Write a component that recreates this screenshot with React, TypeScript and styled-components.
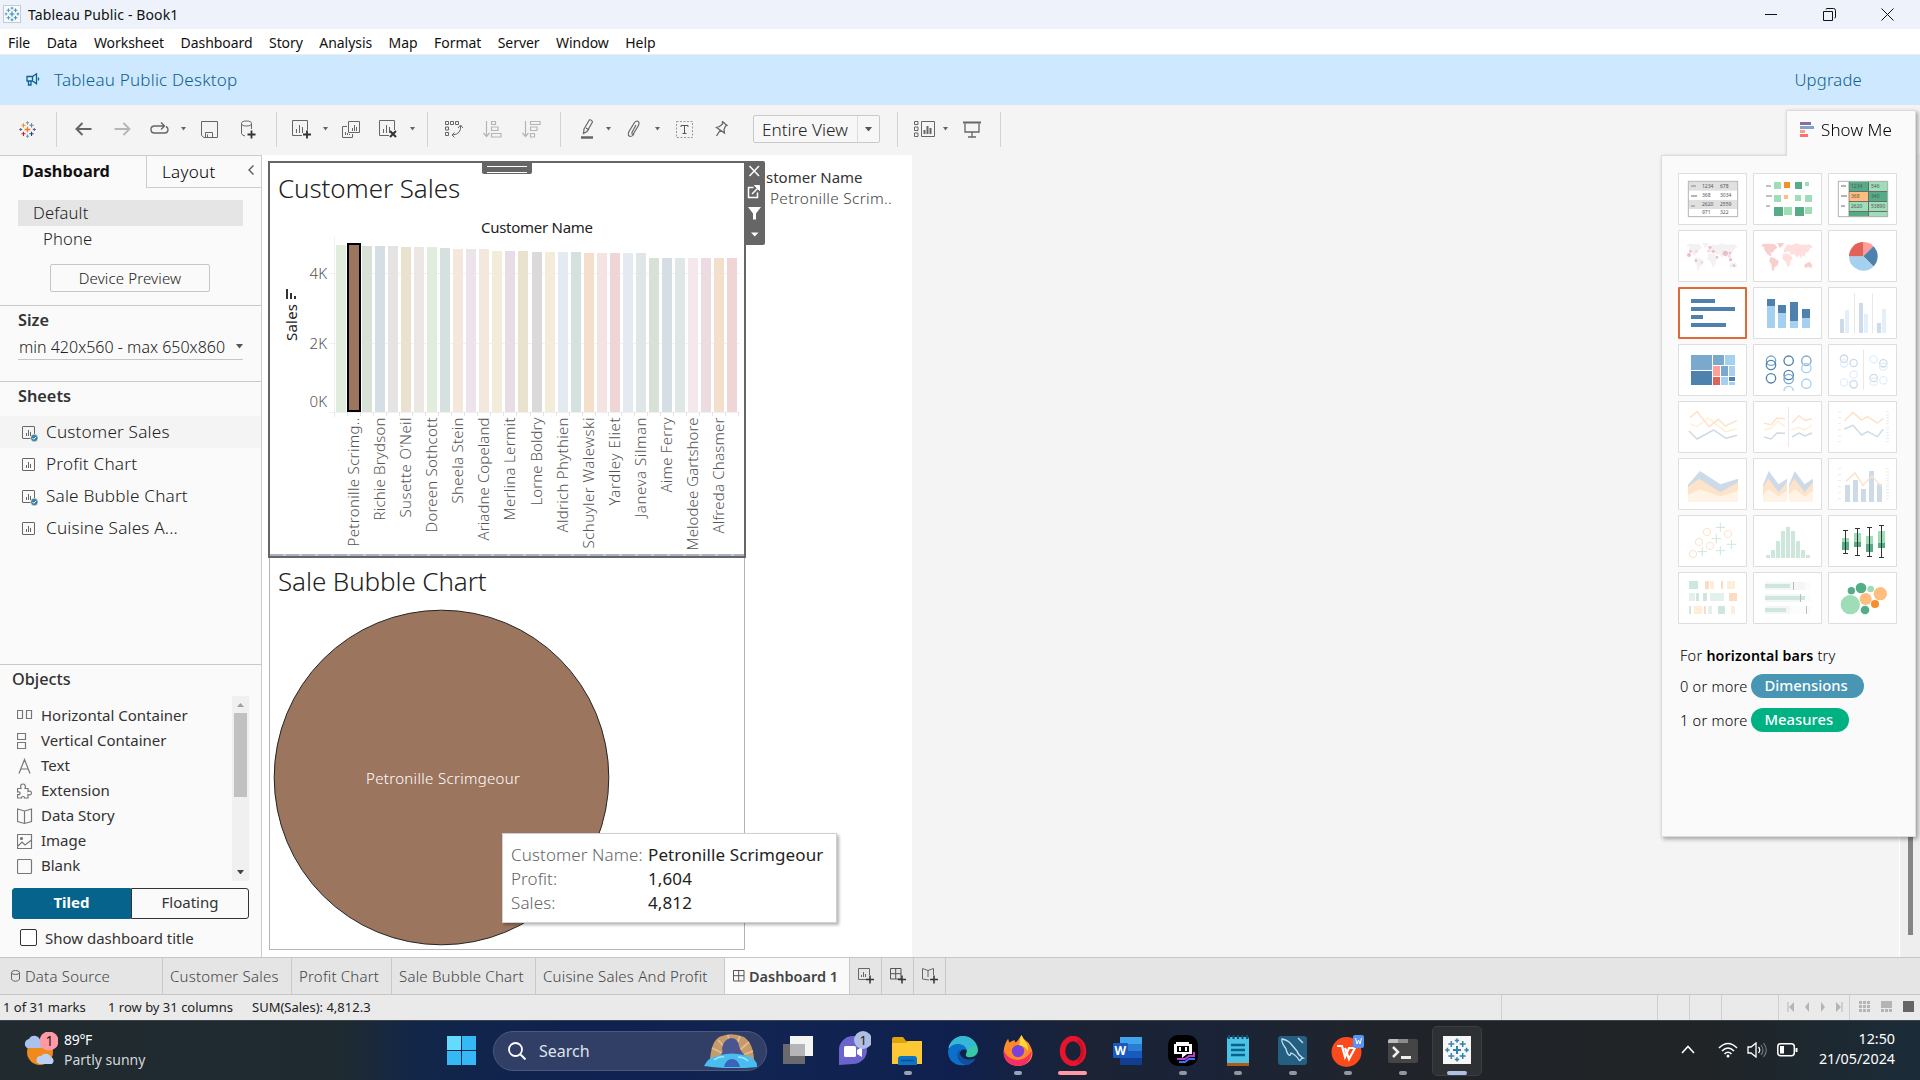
import React from 'react';
import styled, { createGlobalStyle, css } from 'styled-components';

const GlobalStyle = createGlobalStyle`
  * { box-sizing: border-box; }
  body { margin: 0; background: #f4f4f4; }
  body, button { font-family: "Noto Sans", "Open Sans", sans-serif; }
  svg { display: block; flex: none; }
`;

const Screen = styled.div`
  position: relative;
  width: 1920px;
  height: 1080px;
  overflow: hidden;
  display: flex;
  flex-direction: column;
  white-space: nowrap;
  background: #f4f4f4;
  color: #333;
`;

/* ---------- window chrome ---------- */
const TitleBar = styled.header`
  height: 29px;
  display: flex;
  align-items: center;
  background: #eef3fb;
  padding: 0 26px 0 3px;
  font-size: 14px;
  color: #111;
`;
const AppTitle = styled.span`
  margin-left: 6px;
  flex: 1;
  letter-spacing: 0.12px;
`;
const WindowControls = styled.div`
  display: flex;
  gap: 45px;
`;
const MenuBar = styled.nav`
  height: 26px;
  display: flex;
  align-items: center;
  gap: 16.5px;
  padding: 2px 8px 0;
  background: #fff;
  border-bottom: 1px solid #e9edf0;
  font-size: 14px;
  letter-spacing: -0.06px;
  color: #111;
`;
const Banner = styled.div`
  height: 50px;
  display: flex;
  align-items: center;
  background: #cde8ff;
  padding: 0 58px 2px 26px;
  font-size: 17px;
  font-weight: 350;
  color: #0f628c;
  letter-spacing: 0.22px;
`;
const BannerText = styled.span`
  margin-left: 14px;
  flex: 1;
`;
const BannerLink = styled.a`
  font-size: 16.6px;
`;

/* ---------- toolbar ---------- */
const Toolbar = styled.div`
  height: 50px;
  display: flex;
  align-items: center;
  padding: 0 0 2px 19px;
  background: #f4f4f4;
  color: #666;
`;
const Tool = styled.span<{ $gap?: number; $dim?: boolean }>`
  display: flex;
  margin-left: ${p => p.$gap ?? 0}px;
  color: ${p => (p.$dim ? '#b5b5b5' : '#666')};
`;
const Separator = styled.i<{ $gap: number }>`
  width: 1px;
  height: 35px;
  margin-left: ${p => p.$gap}px;
  background: #d2d2d2;
`;
const ViewSelect = styled.div`
  width: 127px;
  height: 28px;
  margin-left: 25px;
  display: flex;
  align-items: center;
  border: 1px solid #c9c9c9;
  border-radius: 2px;
  background: #f7f7f7;
  font-size: 17.2px;
  font-weight: 350;
  color: #222;
  padding-left: 8px;
`;
const SelectArrow = styled.span`
  margin-left: auto;
  width: 22px;
  height: 26px;
  display: flex;
  align-items: center;
  justify-content: center;
  border-left: 1px solid #ddd;
`;

/* ---------- sidebar ---------- */
const Workspace = styled.main`
  height: 802px;
  display: flex;
`;
const Sidebar = styled.aside`
  width: 262px;
  display: flex;
  flex-direction: column;
  background: #fafafa;
  border-top: 1px solid #cdcdcd;
  border-right: 1px solid #cdcdcd;
`;
const Tabs = styled.div`
  display: flex;
  height: 32px;
`;
const ActiveTab = styled.div`
  width: 146px;
  padding: 0 0 0 22px;
  line-height: 30px;
  font-size: 16.3px;
  font-weight: 700;
  color: #111;
`;
const OtherTab = styled.div`
  flex: 1;
  display: flex;
  align-items: center;
  justify-content: space-between;
  padding: 0 7px 0 15px;
  border-left: 1px solid #cdcdcd;
  border-bottom: 1px solid #cdcdcd;
  font-size: 17px;
  font-weight: 350;
  letter-spacing: 0.3px;
  color: #000;
  svg { margin-bottom: 3px; }
`;
const DeviceSection = styled.section`
  height: 118px;
  padding: 12px 18px 0;
  border-bottom: 1px solid #c9c9c9;
  font-size: 16.6px;
  font-weight: 350;
  letter-spacing: 0.15px;
  color: #222;
`;
const DeviceRow = styled.div<{ $active?: boolean }>`
  height: 26px;
  line-height: 25px;
  padding-left: ${p => (p.$active ? 15 : 25)}px;
  background: ${p => (p.$active ? '#e5e5e5' : 'transparent')};
`;
const DeviceButton = styled.div`
  width: 160px;
  height: 28px;
  margin: 12px 0 0 32px;
  border: 1px solid #c6c6c6;
  border-radius: 2px;
  text-align: center;
  font-size: 15px;
  line-height: 27px;
`;
const SizeSection = styled.section`
  height: 76px;
  padding: 0 18px;
  border-bottom: 1px solid #c9c9c9;
`;
const Heading = styled.h3`
  margin: 0;
  font-size: 16.3px;
  font-weight: 600;
  line-height: 29px;
  color: #333;
`;
const SizeSelect = styled.div`
  height: 25px;
  display: flex;
  align-items: center;
  justify-content: space-between;
  border-bottom: 1px solid #c6c6c6;
  font-size: 16px;
  font-weight: 350;
  color: #222;
  padding: 0 0 1px 1px;
`;
const SheetsSection = styled.section`
  height: 283px;
  border-bottom: 1px solid #c9c9c9;
`;
const SheetsHeading = styled(Heading)`
  padding-left: 18px;
  height: 34px;
`;
const SheetRow = styled.div<{ $active?: boolean }>`
  height: 32px;
  display: flex;
  align-items: center;
  gap: 8px;
  padding: 0 0 2px 22px;
  font-size: 17.2px;
  font-weight: 350;
  letter-spacing: 0.17px;
  color: #222;
  background: ${p => (p.$active ? '#f4f4f4' : 'transparent')};
  svg { margin-top: 5px; }
`;
const ObjectsHeading = styled(Heading)`
  padding-left: 12px;
  height: 31px;
  font-weight: 500;
  flex: none;
`;
const ObjectsBox = styled.div`
  height: 185px;
  display: flex;
  justify-content: space-between;
  padding: 0 12px 0 17px;
`;
const ObjectList = styled.div`
  padding-top: 6px;
`;
const ObjectRow = styled.div`
  height: 25px;
  display: flex;
  align-items: center;
  gap: 8px;
  font-size: 15px;
  color: #333;
  svg { margin-top: 3px; }
`;
const ScrollTrack = styled.div`
  width: 17px;
  display: flex;
  flex-direction: column;
  align-items: center;
  padding: 7px 0;
  background: #f0f0f0;
`;
const ScrollThumb = styled.div`
  width: 13px;
  height: 84px;
  margin: 6px 0 auto;
  background: #c1c1c1;
`;
const Segmented = styled.div`
  display: flex;
  height: 31px;
  margin: 7px 12px 0;
  font-size: 15px;
  line-height: 27px;
  text-align: center;
`;
const Segment = styled.span<{ $on?: boolean }>`
  flex: ${p => (p.$on ? '0 0 119px' : '1')};
  border: 1px solid ${p => (p.$on ? '#06648c' : '#333')};
  border-radius: ${p => (p.$on ? '3px 0 0 3px' : '0 3px 3px 0')};
  background: ${p => (p.$on ? '#06648c' : '#fafafa')};
  color: ${p => (p.$on ? '#fff' : '#333')};
  font-weight: ${p => (p.$on ? 700 : 400)};
`;
const CheckRow = styled.label`
  display: flex;
  align-items: center;
  gap: 8px;
  height: 37px;
  padding-left: 20px;
  font-size: 15px;
`;
const CheckBox = styled.i`
  width: 17px;
  height: 17px;
  border: 1px solid #333;
  border-radius: 2px;
  background: #fff;
`;

/* ---------- dashboard ---------- */
const Canvas = styled.div`
  width: 650px;
  display: flex;
  background: #fff;
  padding: 6px 0 0 6px;
`;
const SheetColumn = styled.div`
  position: relative;
  width: 478px;
`;
const SheetFrame = styled.section<{ $selected?: boolean }>`
  display: flex;
  flex-direction: column;
  ${p =>
    p.$selected
      ? css`
          height: 397px;
          border: 2px solid #666;
        `
      : css`
          height: 392px;
          border: 1px solid #b4b4b4;
          border-top: 0;
          margin: 0 1px;
        `}
`;
const SheetTitle = styled.h2<{ $top: number; $h: number }>`
  margin: ${p => p.$top}px 0 0 8px;
  height: ${p => p.$h}px;
  line-height: 42px;
  font-size: 26px;
  font-weight: 300;
  letter-spacing: -0.1px;
  color: #222;
`;
const DropLine = styled.div`
  height: 2px;
  margin-top: auto;
  background: repeating-linear-gradient(90deg, #a9b2c4 0 13px, #c9c9c9 13px 16px);
`;
const DragHandle = styled.div`
  position: absolute;
  left: 214px;
  top: 0;
  width: 50px;
  height: 13px;
  padding: 5px 5px 0;
  border-radius: 0 0 2px 2px;
  background: #666;
  &::before {
    content: "";
    display: block;
    height: 5px;
    border: solid #fff;
    border-width: 1px 0;
  }
`;
const SheetActions = styled.div`
  position: absolute;
  left: 476px;
  top: 0;
  width: 21px;
  height: 84px;
  display: flex;
  flex-direction: column;
  align-items: center;
  background: #666;
  border-radius: 0 2px 2px 0;
`;
const Legend = styled.div`
  padding: 5px 0 0 20px;
  line-height: 22px;
`;
const LegendTitle = styled.div`
  font-size: 15px;
  font-weight: 450;
`;
const LegendItem = styled.div`
  padding: 0 0 0 4px;
  font-size: 15.4px;
  font-weight: 350;
  letter-spacing: 0.3px;
  color: #444;
`;
const Tooltip = styled.dl`
  position: absolute;
  left: 502px;
  top: 833px;
  width: 335px;
  height: 90px;
  margin: 0;
  padding: 9px 0 0 8px;
  display: grid;
  grid-template-columns: 137px 1fr;
  grid-auto-rows: 24px;
  line-height: 24px;
  font-size: 17px;
  background: #fff;
  border: 1px solid #d0d0d0;
  box-shadow: 2px 2px 3px rgba(0, 0, 0, 0.3);
  dt { font-weight: 300; color: #666; letter-spacing: 0.1px; }
  dd { margin: 0; color: #222; font-weight: 450; letter-spacing: 0.1px; }
`;
const PageScroll = styled.div`
  width: 21px;
  margin-left: auto;
  padding: 0 7px 22px 8px;
  display: flex;
  background: #eee;
  border-left: 1px solid #fff;
  &::after { content: ""; width: 6px; background: #858585; }
`;

/* ---------- show me ---------- */
const ShowMe = styled.aside`
  position: absolute;
  left: 1661px;
  top: 110px;
  width: 255px;
  filter: drop-shadow(2px 2px 2px rgba(0, 0, 0, 0.35));
`;
const ShowMeTab = styled.div`
  position: relative;
  z-index: 1;
  width: 130px;
  height: 46px;
  margin-left: auto;
  display: flex;
  align-items: center;
  gap: 7px;
  padding: 0 0 8px 13px;
  background: #fafafa;
  border: 1px solid #dcdcdc;
  border-bottom: 0;
  font-size: 17px;
  font-weight: 350;
  letter-spacing: 0.1px;
  color: #000;
`;
const ShowMeBody = styled.div`
  height: 682px;
  margin-top: -1px;
  padding: 17px 16px 0;
  background: #fafafa;
  border: 1px solid #dcdcdc;
`;
const TileGrid = styled.div`
  display: grid;
  grid-template-columns: repeat(3, 69px);
  gap: 5px 6px;
`;
const Tile = styled.div<{ $selected?: boolean }>`
  height: 52px;
  background: #fff;
  border-radius: 1px;
  box-shadow: inset 0 0 0 ${p => (p.$selected ? '2px #dc6b35' : '1px #dedede')};
`;
const HintLine = styled.div<{ $h: number }>`
  height: ${p => p.$h}px;
  display: flex;
  align-items: center;
  gap: 4px;
  padding-left: 2px;
  font-size: 14.6px;
  font-weight: 350;
  letter-spacing: 0.22px;
  color: #000;
  b { color: #000; font-size: 14.2px; font-weight: 600; letter-spacing: 0.15px; }
`;
const Hints = styled.div`
  margin-top: 17px;
`;
const Pill = styled.span<{ $color: string; $w: number }>`
  width: ${p => p.$w}px;
  height: 24px;
  margin-bottom: 1px;
  padding-left: 13px;
  line-height: 23px;
  border-radius: 12px;
  background: ${p => p.$color};
  color: #fff;
  font-size: 14.8px;
  font-weight: 500;
  letter-spacing: 0;
`;

/* ---------- bottom bars ---------- */
const SheetTabs = styled.div`
  height: 38px;
  display: flex;
  border: solid #c6c6c6;
  border-width: 1px 0;
  background: #e5e5e5;
`;
const SheetTab = styled.div<{ $w: number; $on?: boolean }>`
  width: ${p => p.$w}px;
  display: flex;
  align-items: center;
  gap: ${p => (p.$on ? 4 : 5)}px;
  padding-left: ${p => (p.$on ? 8 : 7)}px;
  border-right: 1px solid #c9c9c9;
  font-size: ${p => (p.$on ? 14.5 : 15)}px;
  letter-spacing: ${p => (p.$on ? 0 : 0.2)}px;
  font-weight: ${p => (p.$on ? 600 : 350)};
  background: ${p => (p.$on ? '#fafafa' : 'transparent')};
  color: ${p => (p.$on ? '#444' : '#444')};
`;
const SourceTab = styled(SheetTab)`
  padding-left: 11px;
`;
const AddTab = styled(SheetTab)`
  padding-left: 8px;
`;
const StatusBar = styled.div`
  height: 25px;
  display: flex;
  align-items: center;
  padding-left: 3px;
  background: #eaeaea;
  font-size: 13px;
  color: #222;
`;
const StatusText = styled.span<{ $w: number }>`
  width: ${p => p.$w}px;
  padding-bottom: 2px;
`;
const StatusCell = styled.span<{ $w: number; $push?: boolean }>`
  width: ${p => p.$w}px;
  height: 25px;
  margin-left: ${p => (p.$push ? 'auto' : 0)};
  border-left: 1px solid #cfcfcf;
  display: flex;
  align-items: center;
  padding: 0 0 2px 8px;
`;

/* ---------- taskbar ---------- */
const Taskbar = styled.footer`
  height: 60px;
  display: flex;
  align-items: center;
  border-top: 1px solid #3d4448;
  background: linear-gradient(90deg, #202a2f 0, #1f2a30 340px, #12264a 420px, #0f2150 600px, #112452 760px, #0f204e 950px, #1b2334 1090px, #1a2338 1200px, #20242a 1380px, #202426 1700px, #1b2b37 1900px);
  color: #fff;
`;
const Weather = styled.div`
  width: 434px;
  display: flex;
  align-items: center;
  gap: 6px;
  padding: 0 0 2px 24px;
  font-size: 14px;
  line-height: 20px;
  color: #d3d7da;
  strong { display: block; font-weight: 400; color: #fff; letter-spacing: -0.3px; }
`;
const SearchBox = styled.div`
  width: 274px;
  height: 40px;
  margin: 0 3px 0 4px;
  display: flex;
  align-items: center;
  padding: 0 8px 0 14px;
  border: 1px solid #4a597d;
  border-radius: 20px;
  background: #313f66;
  font-size: 16px;
  color: #dfe3ec;
`;
const SearchLabel = styled.span`
  flex: 1;
  margin-left: 13px;
`;
const AppSlot = styled.div<{ $active?: boolean; $mark?: string; $markW?: number }>`
  position: relative;
  width: ${p => (p.$active ? 50 : 55)}px;
  height: 50px;
  margin-left: ${p => (p.$active ? 2 : 0)}px;
  display: flex;
  align-items: center;
  justify-content: center;
  ${p =>
    p.$active &&
    css`
      background: #2e3134;
      border: 1px solid #3c3f42;
      border-radius: 5px;
    `}
  &::after {
    content: "";
    position: absolute;
    bottom: ${p => (p.$active ? 0 : 1)}px;
    width: ${p => p.$markW ?? 8}px;
    height: 4px;
    border-radius: 2px;
    background: ${p => p.$mark ?? 'transparent'};
  }
`;
const Tray = styled.div`
  margin-left: auto;
  display: flex;
  align-items: center;
  padding-right: 25px;
`;
const TrayItem = styled.span<{ $gap: number }>`
  margin: -2px ${p => p.$gap}px 0 0;
`;
const Clock = styled.div`
  width: 97px;
  padding-bottom: 3px;
  text-align: right;
  font-size: 14.3px;
  line-height: 20px;
`;

/* ---------- drawing helpers ---------- */
type Box = [number, number, number, number, string];
const Rects = ({ d }: { d: Box[] }) => (
  <>{d.map(([x, y, w, h, f], i) => <rect key={i} x={x} y={y} width={w} height={h} fill={f} stroke="none" />)}</>
);
type Dot = [number, number, number, string];
const Dots = ({ d }: { d: Dot[] }) => (
  <>{d.map(([x, y, r, f], i) => <circle key={i} cx={x} cy={y} r={r} fill={f} stroke="none" />)}</>
);
const Rings = ({ d, w = 3 }: { d: Dot[]; w?: number }) => (
  <>{d.map(([x, y, r, f], i) => <circle key={i} cx={x} cy={y} r={r} fill="none" stroke={f} strokeWidth={w} />)}</>
);
const Lines = ({ d }: { d: [string, string][] }) => (
  <>{d.map(([p, c], i) => <polyline key={i} points={p} fill="none" stroke={c} strokeWidth="4.500" />)}</>
);
const Polys = ({ d }: { d: [string, string][] }) => (
  <>{d.map(([p, c], i) => <polygon key={i} points={p} fill={c} stroke="none" />)}</>
);
const Svg = ({ w, h, children, vb }: { w: number; h: number; vb?: string; children: React.ReactNode }) => (
  <svg width={w} height={h} viewBox={vb ?? `0 0 ${w} ${h}`} fill="none" stroke="currentColor">{children}</svg>
);
const Caret = ({ c = '#666', w = 6 }: { c?: string; w?: number }) => (
  <Svg w={w} h={w / 2 + 1}><path d={`M0 0H${w}L${w / 2} ${w / 2 + 1}Z`} fill={c} stroke="none" /></Svg>
);
const TableauMark = ({ size, colors }: { size: number; colors: string[] }) => {
  const p: [number, number, number][] = [[12, 12, 4], [6.3, 6, 3], [17.7, 6, 3], [6.3, 18, 3], [17.7, 18, 3], [12, 2.6, 2.2], [12, 21.4, 2.2], [2.4, 12, 2.2], [21.6, 12, 2.2]];
  return (
    <Svg w={size} h={size} vb="0 0 24 24">
      {p.map(([x, y, r], i) => (
        <path key={i} d={`M${x - r} ${y}h${2 * r}M${x} ${y - r}v${2 * r}`} stroke={colors[i % colors.length]} strokeWidth={i ? 1.5 : 1.9} />
      ))}
    </Svg>
  );
};

/* ---------- show me tiles ---------- */
const B = '#4e82ac', MB = '#7ba8cd', LB = '#a5d0ef', FB = '#cddbe8', FL = '#e3f0fb';
const DG = '#55ad88', LG = '#9fdcb8', FG = '#cde7dc', FG2 = '#e2f2ea';
const OR = '#f68e2c', LO = '#ffbe7d', FO = '#fde3ca', FO2 = '#fff0d8', FO3 = '#fbdcc2', FO4 = '#ffecd9';
const LAND = [
  'M26 45L34 41 62 42 68 46 73 53 66 58 60 66 52 69 56 76 50 77 40 68 34 58 33 49 27 50Z',
  'M72 40L94 39 88 48 80 53 76 46Z',
  'M52 82L64 84 77 94 73 106 64 112 61 124 57 121 56 104 49 94Z',
  'M94 56L104 43 116 46 130 40 146 44 168 43 180 50 170 56 166 66 158 68 156 80 148 76 146 86 138 74 132 84 124 72 114 74 108 64 92 68Z',
  'M90 72L104 70 112 76 119 83 113 92 112 104 103 112 99 96 88 86Z',
  'M154 104L164 98 170 96 178 106 174 114 166 110 156 114Z',
].join('');
const ticks = (
  <path stroke="#ebebeb" strokeWidth="3" d={[32, 50, 68, 86, 104, 122].map(y => `M30 ${y}h9`).join('') + [32, 42, 51, 60, 68, 78, 86, 95, 104, 113, 122].map(y => `M174 ${y}h9`).join('')} />
);
const cellText = (x: number, y: number, s: string) => (
  <text key={s} x={x} y={y} fontSize="15" fill="#555" stroke="none">{s}</text>
);
const area = (o: number, s: number) => {
  const m = (pts: number[][], b: string) => pts.map(([x, y]) => `${o + x * s},${y}`).join(' ') + b;
  const base = ` ${o + 150 * s},132 ${o},132`;
  return (
    <Polys d={[
      [m([[0, 80], [36, 39], [97, 79], [150, 62]], base), FB],
      [m([[0, 86], [34, 62], [97, 103], [150, 73]], base), FO],
      [m([[0, 110], [36, 94], [97, 115], [150, 99]], base), '#fff3e6'],
    ]} />
  );
};
const TILES: React.ReactNode[] = [
  <>
    <rect x="31" y="25" width="148" height="106" fill="#fff" stroke="#b4b4b4" strokeWidth="3" />
    <Rects d={[[33, 27, 144, 26, '#e0e0e0'], [33, 81, 144, 27, '#e0e0e0'], [39, 36, 15, 6, '#b4b4b4'], [39, 66, 18, 6, '#b4b4b4'], [39, 96, 12, 6, '#b4b4b4']]} />
    {[[72, 45, '1234'], [126, 45, '678'], [72, 73, '368'], [126, 73, '3034'], [72, 100, '2620'], [126, 100, '2559'], [72, 124, '971'], [126, 124, '322']].map(a => cellText(a[0] as number, a[1] as number, a[2] as string))}
  </>,
  <Rects d={[[39, 36, 15, 6, '#c0c0c0'], [39, 66, 18, 6, '#c0c0c0'], [39, 96, 12, 6, '#c0c0c0'], [63, 27, 21, 21, LG], [93, 27, 18, 18, OR], [126, 27, 21, 21, DG], [156, 27, 12, 12, LG], [63, 66, 21, 21, LG], [93, 66, 12, 12, LO], [126, 66, 18, 18, LG], [156, 66, 21, 21, LG], [63, 102, 27, 27, DG], [93, 102, 24, 24, LG], [126, 102, 27, 27, DG], [156, 102, 21, 21, LG]]} />,
  <>
    <Rects d={[[62, 25, 118, 106, '#6b6b6b'], [64, 27, 56, 27, DG], [123, 27, 56, 27, LG], [64, 57, 56, 27, LO], [123, 57, 56, 27, DG], [64, 87, 56, 27, LG], [123, 87, 56, 27, LG], [64, 117, 56, 13, DG], [123, 117, 56, 13, LG], [39, 36, 15, 6, '#b4b4b4'], [39, 66, 18, 6, '#b4b4b4'], [39, 96, 12, 6, '#b4b4b4']]} />
    <rect x="31" y="25" width="148" height="106" stroke="#b4b4b4" strokeWidth="3" />
    {[[69, 45, '1234'], [129, 45, '546'], [69, 75, '368'], [129, 75, '340'], [69, 105, '2620'], [129, 105, '53890']].map(a => cellText(a[0] as number, a[1] as number, a[2] as string))}
  </>,
  <>
    <path d={LAND} fill="#f2f2f2" stroke="none" />
    <Dots d={[[33, 75, 6, '#ebbfc6'], [37, 64, 4, '#ebbfc6'], [55, 64, 5, '#fbdada'], [54, 92, 4, '#ebbfc6'], [71, 97, 5, '#fbdada'], [92, 63, 5, '#fbdada'], [96, 52, 5, '#ebbfc6'], [106, 64, 5, '#ebbfc6'], [117, 82, 4, '#ebbfc6'], [142, 70, 8, '#ebbfc6'], [156, 69, 4, '#ebbfc6'], [158, 89, 5, '#ebbfc6'], [154, 78, 5, '#fbdada'], [168, 107, 4, '#ebbfc6']]} />
  </>,
  <>
    <path d={LAND} fill="#ffdfde" stroke="none" />
    <path d={LAND.slice(0, LAND.indexOf('M94 56'))} fill="#f8cfcd" stroke="none" />
    <path d={LAND.slice(LAND.indexOf('M154'))} fill="#f8cfcd" stroke="none" />
  </>,
  <g stroke="none">
    <path d="M106 79V36A43 43 0 0 1 136.400 48.600Z" fill="#ff9d9a" />
    <path d="M106 79L136.400 48.600A43 43 0 0 1 136.400 109.400Z" fill={B} />
    <path d="M106 79L136.400 109.400A43 43 0 0 1 63 79Z" fill={LB} />
    <path d="M106 79H63A43 43 0 0 1 106 36Z" fill="#e16259" />
  </g>,
  <Rects d={[[39, 36, 72, 12, B], [39, 60, 132, 12, B], [39, 84, 36, 12, B], [39, 108, 105, 12, B]]} />,
  <Rects d={[[42, 36, 24, 21, B], [42, 57, 24, 66, LB], [75, 54, 24, 24, B], [75, 78, 24, 45, LB], [111, 45, 24, 57, B], [111, 102, 24, 21, LB], [147, 66, 24, 27, B], [147, 93, 24, 30, LB]]} />,
  <Rects d={[[78, 18, 3, 120, '#e8e8e8'], [132, 18, 3, 120, '#e8e8e8'], [36, 96, 12, 42, FB], [51, 69, 12, 69, FL], [93, 48, 12, 90, FB], [108, 81, 12, 57, FL], [147, 108, 12, 30, FB], [162, 66, 12, 72, FL]]} />,
  <Rects d={[[39, 33, 63, 45, MB], [105, 33, 33, 30, MB], [141, 33, 30, 30, LB], [39, 81, 63, 42, B], [105, 66, 21, 30, '#ffa09d'], [129, 66, 21, 30, MB], [153, 66, 18, 30, LB], [105, 99, 21, 24, '#e16259'], [129, 99, 21, 24, LB], [153, 99, 18, 12, B], [153, 114, 18, 9, LB]]} />,
  <>
    <Rings w={4} d={[[54, 50, 14, MB], [54, 63, 14, B], [54, 103, 14, B], [107, 50, 14, B], [107, 93, 14, B], [107, 105, 14, MB], [160, 50, 14, MB], [160, 72, 14, LB], [160, 119, 14, LB]]} />
    <path d="M93 141a14 14 0 0 1 28 0" stroke={LB} strokeWidth="4" />
  </>,
  <>
    <Rects d={[[105, 18, 3, 120, '#e8e8e8']]} />
    <Rings w={4} d={[[48, 44, 11, FB], [48, 58, 11, FL], [77, 57, 11, FB], [77, 92, 11, FL], [48, 115, 11, FL], [77, 121, 11, FB], [137, 46, 11, FL], [166, 58, 11, FB], [166, 68, 11, FL], [137, 102, 11, FB], [137, 113, 11, FL], [166, 109, 11, FL]]} />
  </>,
  <Lines d={[['36,68 57,77 91,51 142,92 177,84', FO2], ['36,50 57,32 93,77 121,55 142,75 177,58', FO], ['33,90 57,114 107,87 144,112 177,103', FB]]} />,
  <>
    <Rects d={[[105, 18, 3, 120, '#e8e8e8']]} />
    <Lines d={[['33,67 54,71 72,51 96,53', FO], ['33,88 54,81 75,61 96,76', FO2], ['33,108 54,114 72,96 96,97', FB], ['117,66 138,44 156,58 177,53', FO], ['115,87 135,79 156,87 177,73', FO2], ['117,108 138,96 156,105 177,96', FB]]} />
  </>,
  <>
    {ticks}
    <Lines d={[['49,59 75,34 101,57 119,47 148,66 166,52', FO], ['49,84 75,73 101,102 119,92 148,107 166,84', FB]]} />
  </>,
  area(30, 1),
  <>{area(30, 0.48)}{area(108, 0.48)}</>,
  <>
    {ticks}
    <Rects d={[[51, 81, 15, 51, FB], [75, 66, 15, 66, FB], [99, 93, 15, 39, FB], [123, 39, 15, 93, FB], [147, 78, 15, 54, FB]]} />
    <Lines d={[['54,70 81,45 105,82 132,54 159,84', FO]]} />
  </>,
  <>
    <Rings d={[[87, 51, 11, FO], [150, 57, 11, FO], [63, 81, 11, FO], [96, 93, 11, FO], [45, 117, 11, FO]]} />
    <path stroke={FG} strokeWidth="3" d={[[127, 37], [115, 71], [160, 88], [73, 110], [127, 107]].map(([x, y]) => `M${x - 14} ${y}h28M${x} ${y - 14}v28`).join('')} />
  </>,
  <Rects d={[120, 105, 78, 48, 36, 48, 78, 105, 120].map((y, i): Box => [39 + 15 * i, y, 12, 129 - y, FG])} />,
  <>
    <Rects d={[[42, 69, 21, 12, LG], [42, 81, 21, 24, DG], [78, 54, 21, 27, LG], [78, 81, 21, 15, DG], [114, 63, 21, 24, LG], [114, 87, 21, 24, DG], [150, 48, 21, 36, LG], [150, 84, 21, 15, DG]]} />
    <path stroke="#333" strokeWidth="3" d={[[52.5, 46.5, 115.5], [88.5, 40.5, 121.5], [124.5, 37.5, 124.5], [160.5, 31.5, 127.5]].map(([x, a, b]) => `M${x - 7.5} ${a}h15M${x - 7.5} ${b}h15M${x} ${a}V${b}`).join('')} />
  </>,
  <Rects d={[[33, 27, 27, 24, FG], [81, 27, 12, 24, FO3], [96, 27, 12, 24, FO4], [129, 27, 6, 24, FO3], [147, 27, 24, 24, FO4], [33, 63, 18, 24, FG2], [54, 63, 9, 24, FG], [75, 63, 12, 24, FG], [96, 63, 42, 24, FG2], [153, 63, 24, 24, FO3], [33, 102, 6, 24, FG], [48, 102, 24, 24, FO4], [78, 102, 6, 24, FO3], [90, 102, 12, 24, FG2], [120, 102, 21, 24, FG], [159, 102, 12, 24, FO4]]} />,
  <Rects d={[[36, 30, 138, 24, '#fbfdfd'], [36, 30, 120, 24, '#f6f6f6'], [36, 66, 138, 24, '#fbfdfd'], [36, 66, 108, 24, '#f6f6f6'], [36, 102, 138, 24, '#fbfdfd'], [36, 102, 75, 24, '#f6f6f6'], [36, 36, 75, 12, FG], [36, 72, 120, 12, FG], [36, 108, 63, 12, FG], [120, 30, 3, 24, '#bbb'], [141, 66, 3, 24, '#bbb'], [159, 102, 3, 24, '#bbb']]} />,
  <Dots d={[[67, 98, 29, LG], [70, 56, 11, DG], [99, 48, 16, DG], [128, 51, 10, LG], [157, 65, 20, LO], [113, 81, 18, LO], [141, 96, 12, OR], [111, 114, 13, DG]]} />,
];

/* ---------- charts ---------- */
const BAR_COLORS = ['#e0ecdc', '#9c755f', '#d7e1d5', '#d5dde5', '#e6e4e2', '#e8e2cf', '#ece7e3', '#e0ecdc', '#d4e1df', '#f4e8dd', '#ece3eb', '#f4e8dd', '#f3ecd9', '#e8dce5', '#e8e2cf', '#dbd9da', '#f3ecd9', '#e3eaf1', '#d4e1df', '#f3dfcb', '#f5e2e2', '#f0d5d6', '#e3eaf1', '#dee7e5', '#d7e1d5', '#d5dde5', '#dee7e5', '#f4e8ec', '#ecdbe1', '#f3dfcb', '#f0d5d6'];
const BAR_TOPS = [41, 40, 42, 42, 42, 43, 43, 43, 44, 45, 45, 45, 47, 47, 47, 48, 48, 48, 48, 49, 49, 49, 49, 49, 54, 54, 54, 54, 54, 54, 54];
const NAMES: [string, number][] = [['Petronille Scrimg..', 129], ['Richie Brydson', 103], ['Susette O’Neil', 100], ['Doreen Sothcott', 115], ['Sheela Stein', 86], ['Ariadne Copeland', 123], ['Merlina Lermit', 103], ['Lorne Boldry', 88], ['Aldrich Phythien', 115], ['Schuyler Walewski', 131], ['Yardley Eliet', 88], ['Janeva Silman', 100], ['Aime Ferry', 75], ['Melodee Gartshore', 133], ['Alfreda Chasmer', 116]];
const barX = (i: number) => 66 + 13 * i + (i >= 15 ? 1 : 0);

/* Plot area of the customer bar chart; its top edge sits at the axis title. */
const BarChart = () => (
  <svg width="474" height="346" viewBox="0 0 474 346" fontSize="15">
    <text x="211" y="29" fontWeight="450" fill="#222" textLength="112">Customer Name</text>
    <path d="M64.500 33V214M59 69.500H470M59 139.500H470M59 208.500H470" stroke="#f0f0f0" fill="none" />
    <path d={Array.from({ length: 32 }, (_, i) => `M${barX(i) - 1.5} 208v4`).join('')} stroke="#e4e4e4" fill="none" />
    {BAR_COLORS.map((c, i) =>
      i === 1
        ? <rect key={i} x="78" y="40" width="12" height="167" fill={c} stroke="#000" strokeWidth="2" />
        : <rect key={i} x={barX(i)} y={BAR_TOPS[i]} width="10" height={208 - BAR_TOPS[i]} fill={c} />
    )}
    <g fill="#555" textAnchor="end" fontWeight="350">
      <text x="57" y="74.500">4K</text>
      <text x="57" y="144.500">2K</text>
      <text x="57" y="202.500">0K</text>
      {NAMES.map(([n, len], i) => (
        <text key={n} transform={`translate(${barX(2 * i + 1) + 10} 213.500) rotate(-90)`} textLength={len}>{n}</text>
      ))}
    </g>
    <text transform="translate(27 137) rotate(-90)" fontWeight="450" fill="#222" textLength="37">Sales</text>
    <path d="M17 85v10M21 89v6M25 92v3" stroke="#333" strokeWidth="2" />
  </svg>
);

const BubbleChart = () => (
  <svg width="474" height="342" viewBox="0 0 474 342">
    <circle cx="171.500" cy="170.500" r="167.300" fill="#9c755f" stroke="#222" strokeWidth="1" />
    <text x="96" y="177" fontSize="15" fontWeight="350" fill="#fff" textLength="154">Petronille Scrimgeour</text>
  </svg>
);

/* ---------- small icons ---------- */
const SheetGlyph = ({ used }: { used?: boolean }) => (
  <Svg w={16} h={17}>
    <g stroke="#666"><rect x="0.500" y="1.500" width="12" height="12" rx="0.500" /><path d="M4.500 8v3M6.500 5v6M8.500 7v4" /></g>
    {used && <><circle cx="12.300" cy="13" r="3.700" fill="#37809f" stroke="#f8f8f8" strokeWidth="0.600" /><path d="M10.500 13l1.300 1.300 2.300-2.500" stroke="#fff" /></>}
  </Svg>
);
const NewSheet = ({ x }: { x?: boolean }) => (
  <Svg w={20} h={19}>
    <path d="M10 15.500H0.500V0.500H15.500V10M4.500 9v4M7.500 5v8M10.500 7v6" />
    {x ? <path d="M11 11l6 6M17 11l-6 6" stroke="#333" strokeWidth="2" /> : <path d="M11 14.500h8M15 10.500v8" stroke="#333" strokeWidth="1.800" />}
  </Svg>
);
const OBJECTS: [string, React.ReactNode][] = [
  ['Horizontal Container', <path d="M.5 2.500h5v8h-5zM9.500 2.500h5v8h-5z" />],
  ['Vertical Container', <path d="M.5 .5h8v6h-8zM.5 9.500h8v6h-8z" />],
  ['Text', <path d="M2 15.500L7.500 1.500 13 15.500M4 11h7" />],
  ['Extension', <path d="M.5 5.500H4C3 2 4.500 1 6 1s3 1.500 2 4.500h3v3c2-1 3.500 0 3.500 1.500S13 12.500 11 11.500V15H7.500c.5-2-3.500-2-3 0h-4v-3.500C4 12.500 4 8 .5 9Z" />],
  ['Data Story', <path d="M7.500 3L14.500 1V13.500L7.500 15.500 .5 13.500V1ZM7.500 3V15.500" />],
  ['Image', <><path d="M.5 1.500h14v14H.5zM1 13l4-4 3 3 6.500-5" /><circle cx="4.500" cy="5.500" r="1" fill="#666" /></>],
  ['Blank', <rect x=".5" y="1.500" width="14" height="14" rx="1" />],
];
const GridGlyph = ({ plus }: { plus?: boolean }) => (
  <Svg w={plus ? 16 : 12} h={plus ? 16 : 12}>
    <path d="M.5 .5h10.500v10.500H.5zM5.700 .5V11M.5 5.700H11" stroke="#555" />
    {plus && <path d="M8 11.500h8M12 7.500v8" stroke="#333" strokeWidth="1.500" />}
  </Svg>
);

/* ---------- taskbar icons ---------- */
const WeatherIcon = () => (
  <Svg w={34} h={36}>
    <g stroke="none">
      <circle cx="16" cy="20" r="13" fill="#f08a1c" />
      <path d="M3 16a5 5 0 0 1 2-9 6 6 0 0 1 11 1 4 4 0 0 1 0 8Z" fill="#a9c3ee" />
      <path d="M16 32a4 4 0 0 1 1-8 6 6 0 0 1 10 1 4 4 0 0 1 1 7Z" fill="#bcd0f4" />
      <circle cx="25" cy="9" r="9.500" fill="#ff99a4" />
      <text x="21.500" y="14" fontSize="14" fill="#222">1</text>
    </g>
  </Svg>
);
const SearchArt = () => (
  <Svg w={54} h={34}>
    <g stroke="none">
      <path d="M6 25Q8 4 18 2Q28-2 40 3Q50 10 50 28L6 28Z" fill="#c79a6b" />
      <path d="M8 14l10 5M14 6l8 9M24 1l2 12M36 2l-4 10M45 8l-9 8M49 17l-10 4" stroke="#e2bd8b" strokeWidth="1.800" />
      <path d="M14 23Q20 20 18 14Q20 5 27 4Q34 4 35 12Q37 19 43 23Z" fill="#4b5590" />
      <path d="M0 32Q4 24 12 22Q28 17 44 22Q54 26 53 33Q28 36 0 32Z" fill="#49bdf0" />
      <path d="M10 26q5-4 10-3M34 23q6 0 10 4" stroke="#a5e8fa" strokeWidth="1.500" fill="none" />
      <path d="M20 33q2-8 8-8t8 8Z" fill="#3c63b8" />
    </g>
  </Svg>
);
const apps: { icon: React.ReactNode; mark?: string; markW?: number }[] = [
  { icon: <Svg w={30} h={29}><rect y="8" width="22" height="20" fill="#6a6a6c" stroke="none" /><rect x="7" y="0" width="23" height="20" fill="#f4f4f4" stroke="none" /><rect x="7" y="8" width="15" height="12" fill="#b5b5b7" stroke="none" /></Svg> },
  { icon: <Svg w={36} h={40}><g stroke="none"><path d="M4 34V20A14 14 0 1 1 18 33Z" fill="#6a64cc" /><rect x="9" y="15" width="12" height="11" rx="1.500" fill="#fff" /><path d="M22 19l5-3v10l-5-3Z" fill="#fff" /><circle cx="28" cy="9" r="9" fill="#aebde0" /><text x="24.500" y="14" fontSize="13" fill="#222">1</text></g></Svg> },
  { icon: <Svg w={31} h={28}><g stroke="none"><path d="M0 2a2 2 0 0 1 2-2h9l3 4h15v6H0Z" fill="#e0a20c" /><path d="M0 6h14l3-2h13v23H0Z" fill="#fcc934" /><path d="M6 28v-6q0-3 3-3h13q3 0 3 3v6Z" fill="#0c74c6" /><path d="M9 23.500h13" stroke="#064f92" strokeWidth="1.500" /></g></Svg>, mark: '#9ba2b8' },
  { icon: <Svg w={30} h={30} vb="0 0 24 24"><g stroke="none"><path d="M12 0A12 12 0 0 1 24 11C24 16 19 18 15 16.500 13 15 15.500 14 15 11 13 7 5 6 .5 11A12 12 0 0 1 12 0Z" fill="#38c8a8" /><path d="M12 0A12 12 0 0 0 .3 10C5 5 14 6 15 11L22 7A12 12 0 0 0 12 0Z" fill="#35b7d8" /><path d="M0 12C2 4 15 5 15 12 11 8 6 15 12 20 16 23 20 20 22 18 17 26 0 26 0 12Z" fill="#0c70ca" /><path d="M9 11C5 17 10 24 17 23 20 21 21 20 22 18 17 20 9 19 9 11Z" fill="#124f9c" /></g></Svg> },
  { icon: <Svg w={30} h={31} vb="0 0 24 25"><g stroke="none"><path d="M12 25C4 25 0 19 .5 13 .7 9 2 6 4 3L5 6 9 4 10 6C12 5 13 2 15 0 16 4 20 5 21 7L22 9C27 18 20 25 12 25Z" fill="#ff8a2c" /><path d="M12 25C4 25 0 19 .5 13 6 23 18 22 23 13 23 20 19 25 12 25Z" fill="#f82d63" /><circle cx="12" cy="13" r="5" fill="#7c41d8" /><path d="M15 0C16 5 21 6 20 13 18 9 16 9 13 8 14 5 13 3 15 0Z" fill="#ffdc3a" /></g></Svg>, mark: '#9ba2b8' },
  { icon: <Svg w={30} h={30}><ellipse cx="15" cy="15" rx="10.500" ry="12.500" stroke="#e8142c" strokeWidth="5.500" /><path d="M20 4Q29 15 20 26" stroke="#9c0a1c" strokeWidth="3" opacity=".4" /></Svg>, mark: '#ff99a4', markW: 29 },
  { icon: <Svg w={30} h={30}><g stroke="none"><path d="M7 1h22v8H7Z" fill="#41a5ee" /><path d="M7 8h22v7H7Z" fill="#2b7cd3" /><path d="M7 15h22v7H7Z" fill="#185abd" /><path d="M7 22h22v7H7Z" fill="#103f91" /><rect x="0" y="7" width="15" height="15" rx="1" fill="#185abd" /><text x="1.500" y="19" fontSize="12" fontWeight="700" fill="#fff">W</text></g></Svg> },
  { icon: <Svg w={30} h={31}><g stroke="none"><rect width="30" height="31" rx="10" fill="#000" /><path d="M8 7h13v2h3v10h-5l-5 4v-4H6V9h2Z" fill="#fff" /><path d="M9 11h12v6H9Z" fill="#000" /><path d="M11 12h2v4h-2zM17 12h2v4h-2z" fill="#fff" /><path d="M9 24h8l4-3h5v-4" stroke="#c03ad8" strokeWidth="2" fill="none" /><path d="M11 27h6l4-3h6" stroke="#4470f0" strokeWidth="2" fill="none" /></g></Svg>, mark: '#93979d' },
  { icon: <Svg w={24} h={31}><g stroke="none"><rect x="1" y="2" width="22" height="28" rx="2" fill="#4cc3e4" /><rect x="1" y="28" width="22" height="3" fill="#b45a10" /><path d="M3 0v4M7.500 0v4M12 0v4M16.500 0v4M21 0v4" stroke="#134f74" strokeWidth="2" /><path d="M5 10h14M5 15h14M5 20h14" stroke="#04648c" strokeWidth="2.500" /></g></Svg>, mark: '#93979d' },
  { icon: <Svg w={29} h={30}><rect width="29" height="29" rx="3" fill="#245f82" stroke="none" /><path d="M4 3C12 4 14 10 19 15 20 19 22 20 25 22 22 22 23 26 21 24 18 19 16 18 13 17 12 22 9 18 8 13 6 9 3 7 4 3ZM20 2l5 5" stroke="#c4e2f0" strokeWidth="1.300" /></Svg>, mark: '#93979d' },
  { icon: <Svg w={33} h={33}><g stroke="none"><ellipse cx="15.500" cy="18" rx="15" ry="15" fill="#fb4a1c" /><path d="M6 12h5l3 11 4-9h6" stroke="#fff" strokeWidth="2.200" fill="none" /><path d="M14 14l4 11 7-13" stroke="#fff" strokeWidth="2.200" fill="none" /><rect x="22" y="1" width="11" height="13" rx="2" fill="#5b92f6" /><path d="M24.500 4l1.500 6 1.500-4 1.500 4 1.500-6" stroke="#fff" /></g></Svg>, mark: '#93979d' },
  { icon: <Svg w={30} h={24}><g stroke="none"><rect width="30" height="24" rx="2" fill="#454545" /><path d="M0 4V2Q0 0 2 0H10V4Z" fill="#bcbcbc" /><path d="M10 0H20V4H10Z" fill="#8a8a8a" /><path d="M5 8l5 5-5 5" stroke="#eee" strokeWidth="2.500" fill="none" /><rect x="13" y="17" width="10" height="3" fill="#eee" /></g></Svg>, mark: '#93979d' },
];

const MENUS = ['File', 'Data', 'Worksheet', 'Dashboard', 'Story', 'Analysis', 'Map', 'Format', 'Server', 'Window', 'Help'];
const BLUES = ['#3b87b5', '#4d93bd'];

export default function App() {
  return (
    <Screen>
      <GlobalStyle />
      <TitleBar>
        <Svg w={19} h={19}><rect x=".5" y=".5" width="17" height="17" fill="#f4f9fc" stroke="#c4cbd2" /><svg x="1.500" y="1.500"><TableauMark size={15} colors={BLUES} /></svg></Svg>
        <AppTitle>Tableau Public - Book1</AppTitle>
        <WindowControls>
          <Svg w={13} h={13}><path d="M0 6.500h12" stroke="#111" /></Svg>
          <Svg w={13} h={13}><path d="M.5 3.500h9v9h-9zM3 1.500Q3 .5 4 .5H10.500Q12.500 .5 12.500 2.500V9Q12.500 10 11.500 10" stroke="#111" /></Svg>
          <Svg w={13} h={13}><path d="M.5 .5l12 12M12.500 .5l-12 12" stroke="#111" /></Svg>
        </WindowControls>
      </TitleBar>
      <MenuBar>{MENUS.map(m => <span key={m}>{m}</span>)}</MenuBar>
      <Banner>
        <Svg w={14} h={13}><path d="M1 3.500h5.500L10.500 .8v10L6.500 8H1ZM2.500 8v4H5V8M6.500 3.500V8M12.500 4.500v3" strokeWidth="1.300" /></Svg>
        <BannerText>Tableau Public Desktop</BannerText>
        <BannerLink>Upgrade</BannerLink>
      </Banner>

      <Toolbar>
        <Tool><TableauMark size={17} colors={['#eb7a2b', '#eb9129', '#59879b', '#c72037', '#1f457e', '#7199a6', '#7b8fae', '#5b6591', '#5b6591']} /></Tool>
        <Separator $gap={20} />
        <Tool $gap={18}><Svg w={17} h={14}><path d="M16.500 7H1.500M7.500 1L1.500 7l6 6" strokeWidth="2" /></Svg></Tool>
        <Tool $gap={22} $dim><Svg w={17} h={14}><path d="M.5 7H15.500M9.500 1l6 6-6 6" strokeWidth="1.800" /></Svg></Tool>
        <Tool $gap={19}><Svg w={19} h={14}><path d="M6 11H4.500Q1 11 1 7.500T4.500 4H14M11 .5L14.500 4 11 7.500M16 4.500Q18 5.500 18 7.500 18 11 14.500 11H6" strokeWidth="1.400" /></Svg></Tool>
        <Tool $gap={12}><Caret w={5} /></Tool>
        <Tool $gap={15}><Svg w={17} h={17}><path d="M.5 .5h16v16H3L.5 14.500ZM4.500 16v-4.500h7V16M6.500 13.500v2.500" /></Svg></Tool>
        <Tool $gap={23}><Svg w={15} h={19}><ellipse cx="5.500" cy="3.500" rx="5" ry="2.500" /><path d="M.5 3.500v10Q1 15.500 4 16M10.500 3.500V9" /><path d="M6.500 14.500h8M10.500 10.500v8" stroke="#333" strokeWidth="1.800" /></Svg></Tool>
        <Separator $gap={20} />
        <Tool $gap={15}><NewSheet /></Tool>
        <Tool $gap={11}><Caret w={5} /></Tool>
        <Tool $gap={14}><Svg w={18} h={17}><path d="M6.500 .5h11v11h-11zM10.500 7v3M12.500 4v6M14.500 6v4M5 5.500H.5v11h10V13M3.500 11v3M5.500 12v2M7.500 13v1" /></Svg></Tool>
        <Tool $gap={19}><NewSheet x /></Tool>
        <Tool $gap={11}><Caret w={5} /></Tool>
        <Separator $gap={12} />
        <Tool $gap={17}><Svg w={18} h={17}><path d="M.5 .5h3v3h-3zM5.500 .5h3v3h-3zM10.500 .5h3v3h-3zM.5 6h3v3h-3zM.5 11.500h3v3h-3zM15.500 5q1 8-8 9M13 7l2.500-3L18 7M9.500 11.500L7 14l2.500 2.500" /></Svg></Tool>
        <Tool $gap={20} $dim><Svg w={19} h={17}><path d="M3.500 0v15M.5 12l3 3.500 3-3.500M8.500 .5h4v3h-4zM8.500 6h6.500v3.500H8.500zM8.500 12.500h9.500v3.500H8.500z" strokeWidth="1.200" /></Svg></Tool>
        <Tool $gap={20} $dim><Svg w={19} h={17}><path d="M3.500 0v15M.5 12l3 3.500 3-3.500M8.500 .5h9.500v3H8.500zM8.500 6h6.500v3.500H8.500zM8.500 12.500h4v3.500h-4z" strokeWidth="1.200" /></Svg></Tool>
        <Separator $gap={19} />
        <Tool $gap={19}><Svg w={14} h={20}><path d="M4 10L9.500 .8Q12 .5 12.500 3L7 12.500 3.500 14.500ZM6 9l3 2" strokeWidth="1.200" /><path d="M1 18.500h12" strokeWidth="2.500" /></Svg></Tool>
        <Tool $gap={12}><Caret w={5} /></Tool>
        <Tool $gap={16}><Svg w={14} h={18}><path d="M9 5L5 12.500Q4.500 14.500 6 14.500L11.500 5.500Q13 1.500 10 1 8.500 1 7.500 2.500L2 11.500Q0 16 3.500 16.500 5.500 16.500 7 14" strokeWidth="1.200" /></Svg></Tool>
        <Tool $gap={14}><Caret w={5} /></Tool>
        <Tool $gap={16}><Svg w={17} h={17}><rect x=".5" y=".5" width="16" height="16" strokeDasharray="2 1.500" stroke="#999" /><path d="M5 6V4.500h7V6M8.500 4.500v8M6.500 12.500h4" stroke="#555" /></Svg></Tool>
        <Tool $gap={22}><Svg w={13} h={16}><path d="M7.500 .5L12 4.500 10.500 5 9 8.500 9.500 12 1.500 6.500 4.500 5.500 7.500 3ZM5 9.500L1.500 15" strokeWidth="1.300" /></Svg></Tool>
        <ViewSelect>Entire View<SelectArrow><Caret c="#555" w={7} /></SelectArrow></ViewSelect>
        <Separator $gap={17} />
        <Tool $gap={16}><Svg w={21} h={16}><path d="M.5 .5h3.500v3H.5zM.5 6h3.500v3.500H.5zM.5 12h3.500v3.500H.5zM7.500 .5h13v15h-13z" /><path d="M10.500 9v4M13.500 5v8M16.500 7v6" strokeWidth="2" /></Svg></Tool>
        <Tool $gap={8}><Caret w={5} /></Tool>
        <Tool $gap={15}><Svg w={18} h={17}><path d="M0 1.500h18" strokeWidth="2" /><path d="M2 2.500v8.500h14V2.500M9 11v5M5 16h8" strokeWidth="1.300" /></Svg></Tool>
        <Separator $gap={19} />
      </Toolbar>

      <Workspace>
        <Sidebar>
          <Tabs>
            <ActiveTab>Dashboard</ActiveTab>
            <OtherTab>Layout<Svg w={6} h={10}><path d="M5.500 .5L1 5l4.500 4.500" stroke="#555" strokeWidth="1.300" /></Svg></OtherTab>
          </Tabs>
          <DeviceSection>
            <DeviceRow $active>Default</DeviceRow>
            <DeviceRow>Phone</DeviceRow>
            <DeviceButton>Device Preview</DeviceButton>
          </DeviceSection>
          <SizeSection>
            <Heading>Size</Heading>
            <SizeSelect>min 420x560 - max 650x860<Caret c="#555" w={7} /></SizeSelect>
          </SizeSection>
          <SheetsSection>
            <SheetsHeading>Sheets</SheetsHeading>
            <SheetRow $active><SheetGlyph used />Customer Sales</SheetRow>
            <SheetRow><SheetGlyph />Profit Chart</SheetRow>
            <SheetRow><SheetGlyph used />Sale Bubble Chart</SheetRow>
            <SheetRow><SheetGlyph />Cuisine Sales A...</SheetRow>
          </SheetsSection>
          <ObjectsHeading>Objects</ObjectsHeading>
          <ObjectsBox>
            <ObjectList>
              {OBJECTS.map(([name, icon]) => (
                <ObjectRow key={name}><Svg w={16} h={17}><g stroke="#777" strokeWidth="1.200">{icon}</g></Svg>{name}</ObjectRow>
              ))}
            </ObjectList>
            <ScrollTrack>
              <Svg w={7} h={4}><path d="M0 4h7L3.500 0Z" fill="#a0a0a0" stroke="none" /></Svg>
              <ScrollThumb />
              <Caret w={7} c="#444" />
            </ScrollTrack>
          </ObjectsBox>
          <Segmented><Segment $on>Tiled</Segment><Segment>Floating</Segment></Segmented>
          <CheckRow><CheckBox />Show dashboard title</CheckRow>
        </Sidebar>

        <Canvas>
          <SheetColumn>
            <SheetFrame $selected>
              <SheetTitle $top={4} $h={37}>Customer Sales</SheetTitle>
              <BarChart />
              <DropLine />
            </SheetFrame>
            <SheetFrame>
              <SheetTitle $top={2} $h={47}>Sale Bubble Chart</SheetTitle>
              <BubbleChart />
            </SheetFrame>
            <DragHandle />
            <SheetActions>
              <Svg w={21} h={84}>
                <g stroke="#fff">
                  <path d="M5.500 5l9.500 10M15 5l-9.500 10" strokeWidth="1.500" />
                  <path d="M9.500 26.500h-5v10h9v-5M8 33l6-6" strokeWidth="1.500" />
                  <path d="M10.500 24.500h5v5Z" fill="#fff" />
                  <path d="M4 46h13L12 52.500v6h-3v-6Z" fill="#fff" stroke="none" />
                  <path d="M7 71.500h7.500l-3.700 4Z" fill="#fff" stroke="none" />
                </g>
              </Svg>
            </SheetActions>
          </SheetColumn>
          <Legend>
            <LegendTitle>stomer Name</LegendTitle>
            <LegendItem>Petronille Scrim..</LegendItem>
          </Legend>
        </Canvas>
        <PageScroll />
      </Workspace>

      <SheetTabs>
        <SourceTab $w={163}><Svg w={9} h={12}><ellipse cx="4.500" cy="2.500" rx="4" ry="2" stroke="#666" /><path d="M.5 2.500v7q4 3.500 8 0v-7" stroke="#666" /></Svg>Data Source</SourceTab>
        <SheetTab $w={129}>Customer Sales</SheetTab>
        <SheetTab $w={100}>Profit Chart</SheetTab>
        <SheetTab $w={144}>Sale Bubble Chart</SheetTab>
        <SheetTab $w={189}>Cuisine Sales And Profit</SheetTab>
        <SheetTab $w={125} $on><GridGlyph />Dashboard 1</SheetTab>
        <AddTab $w={32}><Svg w={16} h={16}><path d="M8 11.500H.5V.5h11V7M3.500 7v2M5.500 4v5M7.500 6v3" stroke="#666" /><path d="M8 11.500h8M12 7.500v8" stroke="#333" strokeWidth="1.500" /></Svg></AddTab>
        <AddTab $w={32}><GridGlyph plus /></AddTab>
        <AddTab $w={32}><Svg w={16} h={16}><path d="M7 12L.5 11V.5L6 2.500 11.500 .5V7M6 2.500V9" stroke="#666" /><path d="M8 11.500h8M12 7.500v8" stroke="#333" strokeWidth="1.500" /></Svg></AddTab>
      </SheetTabs>

      <StatusBar>
        <StatusText $w={105}>1 of 31 marks</StatusText>
        <StatusText $w={144}>1 row by 31 columns</StatusText>
        <StatusText $w={140}>SUM(Sales): 4,812.3</StatusText>
        <StatusCell $w={156} $push />
        <StatusCell $w={32} />
        <StatusCell $w={32} />
        <StatusCell $w={57} />
        <StatusCell $w={71}>
          <Svg w={56} h={10}><path d="M1 0v10" stroke="#b4b4b4" /><path d="M7 0v10L2 5ZM22 0v10L18 5ZM34 0v10l4-5ZM49 0v10l5-5Z" fill="#b4b4b4" stroke="none" /><path d="M55 0v10" stroke="#b4b4b4" /></Svg>
        </StatusCell>
        <StatusCell $w={71}>
          <Svg w={57} h={11}>
            <Rects d={[1, 5, 9].flatMap(x => [0, 4, 8].map((y): Box => [x, y, 3, 3, '#b4b4b4'])).concat([[23, 0, 11, 7, '#b4b4b4'], [23, 8, 3, 3, '#b4b4b4'], [27, 8, 3, 3, '#b4b4b4'], [31, 8, 3, 3, '#b4b4b4'], [45, 0, 11, 11, '#666']])} />
          </Svg>
        </StatusCell>
      </StatusBar>

      <Taskbar>
        <Weather><WeatherIcon /><span><strong>89°F</strong>Partly sunny</span></Weather>
        <AppSlot><Svg w={29} h={29}><path d="M0 0h14v14H0zM15 0h14v14H15zM0 15h14v14H0zM15 15h14v14H15z" fill="#35b9f6" stroke="none" /><path d="M0 0h14v14H0z" fill="#64dbfb" stroke="none" /></Svg></AppSlot>
        <SearchBox>
          <Svg w={18} h={18}><circle cx="7.500" cy="7.500" r="6.500" stroke="#fff" strokeWidth="1.800" /><path d="M12.500 12.500l5 5" stroke="#fff" strokeWidth="2" /></Svg>
          <SearchLabel>Search</SearchLabel>
          <SearchArt />
        </SearchBox>
        {apps.map((a, i) => <AppSlot key={i} $mark={a.mark} $markW={a.markW}>{a.icon}</AppSlot>)}
        <AppSlot $active $mark="#b0bfe4" $markW={20}>
          <Svg w={28} h={29}><rect width="28" height="28" fill="#f6f6f6" stroke="none" /><svg x="2" y="2"><TableauMark size={24} colors={['#2f7fa8', '#3b86ae']} /></svg></Svg>
        </AppSlot>
        <Tray>
          <TrayItem $gap={23}><Svg w={14} h={9}><path d="M1 8l6-6.500L13 8" stroke="#fff" strokeWidth="1.600" /></Svg></TrayItem>
          <TrayItem $gap={9}><Svg w={20} h={16}><path d="M1 6Q10-3 19 6M4 9Q10 3 16 9M6.500 12Q10 8.500 13.500 12" stroke="#fff" strokeWidth="1.600" /><circle cx="10" cy="14" r="1.500" fill="#fff" stroke="none" /></Svg></TrayItem>
          <TrayItem $gap={10}><Svg w={20} h={16}><path d="M1 5h3l5-4v14l-5-4H1Z" stroke="#fff" strokeWidth="1.300" /><path d="M11.500 5q2.500 3 0 6" stroke="#fff" strokeWidth="1.300" /><path d="M14 3q4 5 0 10M16.500 1q5.500 7 0 14" stroke="#777" strokeWidth="1.200" /></Svg></TrayItem>
          <TrayItem $gap={0}><Svg w={21} h={14}><rect x=".8" y=".8" width="16.500" height="12" rx="3" stroke="#fff" strokeWidth="1.500" /><rect x="3" y="3" width="4" height="7.500" fill="#fff" stroke="none" /><path d="M19.500 5v4" stroke="#fff" strokeWidth="2" /></Svg></TrayItem>
          <Clock>12:50<br />21/05/2024</Clock>
        </Tray>
      </Taskbar>

      <Tooltip>
        <dt>Customer Name:</dt><dd>Petronille Scrimgeour</dd>
        <dt>Profit:</dt><dd>1,604</dd>
        <dt>Sales:</dt><dd>4,812</dd>
      </Tooltip>

      <ShowMe>
        <ShowMeTab>
          <Svg w={14} h={16}><Rects d={[[0, 0, 11, 3, '#8a6f98'], [0, 4, 14, 3, '#82a4cc'], [0, 8, 5, 3, '#fba27c'], [0, 12, 8, 3, '#fb6f7c']]} /></Svg>
          Show Me
        </ShowMeTab>
        <ShowMeBody>
          <TileGrid>
            {TILES.map((t, i) => <Tile key={i} $selected={i === 6}><Svg w={69} h={52} vb="0 0 207 156">{t}</Svg></Tile>)}
          </TileGrid>
          <Hints>
            <HintLine $h={28}><span>For</span><b>horizontal bars</b><span>try</span></HintLine>
            <HintLine $h={34}>0 or more<Pill $color="#4996b4" $w={113}>Dimensions</Pill></HintLine>
            <HintLine $h={34}>1 or more<Pill $color="#00b181" $w={98}>Measures</Pill></HintLine>
          </Hints>
        </ShowMeBody>
      </ShowMe>
    </Screen>
  );
}
